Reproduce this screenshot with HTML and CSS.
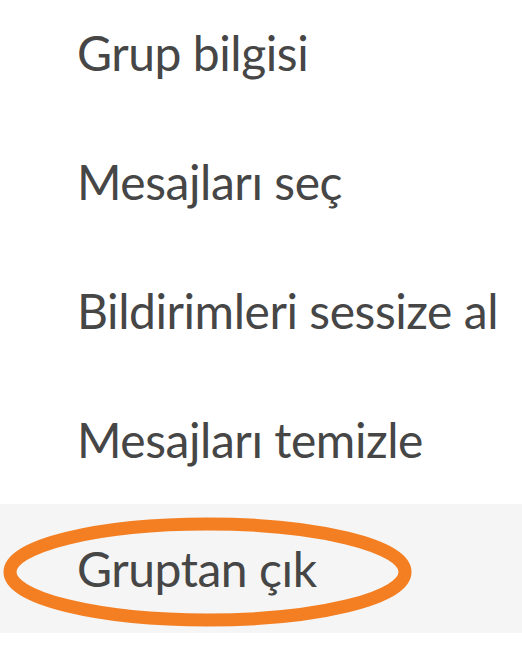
FILE: index.html
```html
<!DOCTYPE html>
<html lang="tr">
<head>
<meta charset="utf-8">
<title>Menü</title>
<link rel="stylesheet" href="styles.css">
</head>
<body>
<ul class="menu">
  <li class="item">Grup bilgisi</li>
  <li class="item">Mesajları seç</li>
  <li class="item">Bildirimleri sessize al</li>
  <li class="item">Mesajları temizle</li>
  <li class="item item--active">
    Gruptan çık
    <svg class="mark" width="420" height="130" viewBox="0 0 420 130" aria-hidden="true">
      <ellipse cx="207.5" cy="68" rx="197.5" ry="48" fill="none" stroke="#f47f22" stroke-width="13"/>
    </svg>
  </li>
</ul>
</body>
</html>
```

FILE: styles.css
```css
html, body {
  margin: 0;
  padding: 0;
  background: #ffffff;
}

body {
  width: 522px;
  height: 646px;
  overflow: hidden;
  font-family: Lato, "Open Sans", "DejaVu Sans", sans-serif;
}

.menu {
  list-style: none;
  margin: -12px 0 0 0;
  padding: 0;
}

.item {
  position: relative;
  height: 129px;
  line-height: 129px;
  padding-left: 77px;
  font-size: 48px;
  letter-spacing: -0.45px;
  color: #464646;
  white-space: nowrap;
}

.item--active {
  background: #f5f5f5;
}

.mark {
  position: absolute;
  left: 0;
  top: 0;
  pointer-events: none;
}
```
